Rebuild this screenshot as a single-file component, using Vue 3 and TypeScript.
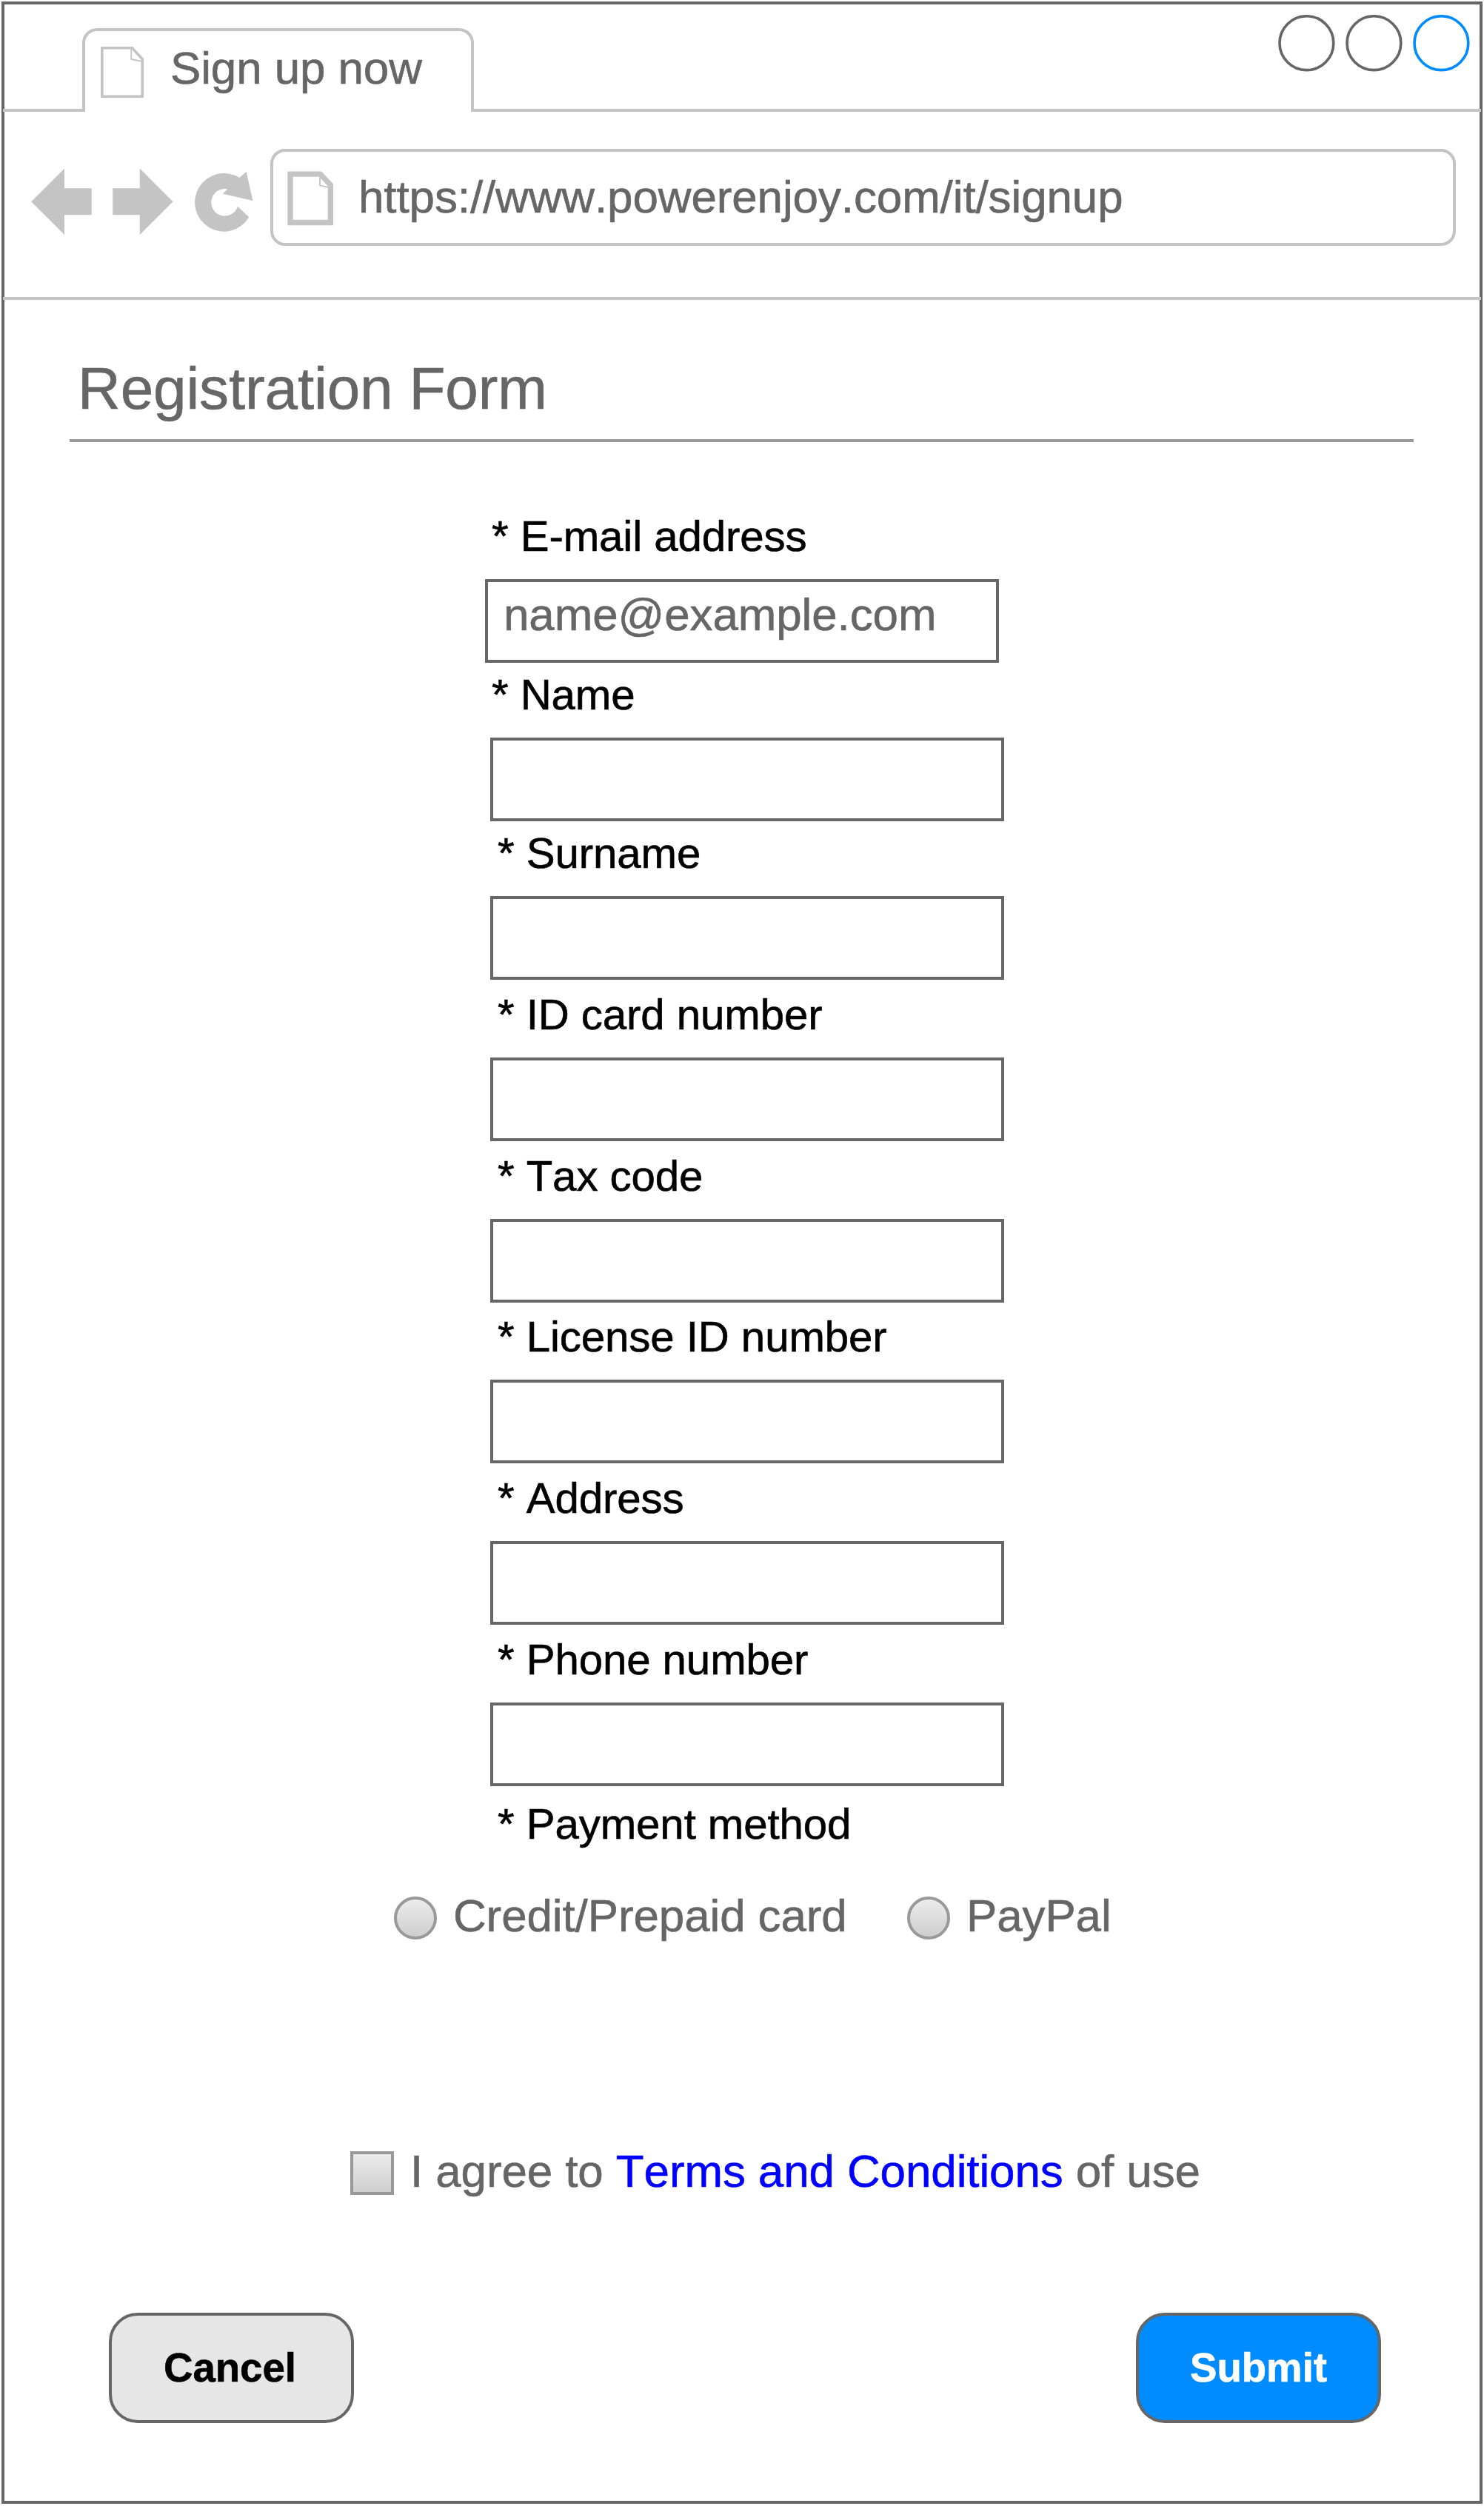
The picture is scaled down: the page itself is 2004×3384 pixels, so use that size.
<script setup lang="ts">
interface Field {
  label: string
  value?: string
  variant?: 'email' | 'name'
}

const fields: Field[] = [
  { label: 'E-mail address', value: 'name@example.com', variant: 'email' },
  { label: 'Name', variant: 'name' },
  { label: 'Surname' },
  { label: 'ID card number' },
  { label: 'Tax code' },
  { label: 'License ID number' },
  { label: 'Address' },
  { label: 'Phone number' },
]

const methods: string[] = ['Credit/Prepaid card', 'PayPal']
const controls: string[] = ['#666', '#666', '#008cff']
</script>

<template>
  <div class="page">
    <div class="window">
      <header class="titlebar">
        <div class="tab">
          <svg class="tab-icon" width="60" height="72" viewBox="0 0 60 72">
            <path d="M2.8 2.8H43.5L57.2 17.8V68.2H2.8Z" fill="none" stroke="#c4c4c4" stroke-width="3.6" />
            <path d="M42.2 4V18L57 21" fill="none" stroke="#c4c4c4" stroke-width="1.8" />
          </svg>
          <span class="tab-title">Sign up now</span>
        </div>
        <div class="controls">
          <svg v-for="(c, i) in controls" :key="i" width="77" height="77" viewBox="0 0 77 77">
            <circle cx="38.4" cy="38.2" r="36.4" fill="#fff" :stroke="c" stroke-width="3.64" />
          </svg>
        </div>
      </header>

      <nav class="toolbar">
        <svg class="nav-icons" width="304" height="92" viewBox="40 226 304 92">
          <g fill="#c4c4c4">
            <path d="M42.2 272.3L87 227.5V254.2H123.7V290.3H87V317Z" />
            <path d="M233.5 272.3L188.8 227.5V254.2H152.2V290.3H188.8V317Z" />
            <path d="M323.2 240A39.3 39.3 0 1 0 336.2 293.3L321 278.7A18.3 18.3 0 1 1 307 255.3L301 261.7L341.5 271L332.6 232Z" />
          </g>
        </svg>
        <div class="urlbar">
          <svg class="url-icon" width="62" height="74" viewBox="388 231.5 62 74">
            <path d="M392 235.7H432.7L446.4 250.4V301H392Z" fill="none" stroke="#c4c4c4" stroke-width="7.3" />
            <path d="M432 238V250.8L446 254" fill="none" stroke="#c4c4c4" stroke-width="1.8" />
          </svg>
          <span class="url">https://www.powerenjoy.com/it/signup</span>
        </div>
      </nav>

      <main class="content">
        <h1>Registration Form</h1>

        <section class="fields">
          <div v-for="f in fields" :key="f.label" class="field" :class="f.variant">
            <div class="label">* {{ f.label }}</div>
            <div class="input">{{ f.value }}</div>
          </div>
        </section>

        <div class="label payment">* Payment method</div>
        <div class="methods">
          <div v-for="m in methods" :key="m" class="method">
            <span class="radio"></span>
            <span>{{ m }}</span>
          </div>
        </div>

        <div class="terms">
          <span class="checkbox"></span>
          <span>I agree to <a>Terms and Conditions</a> of use</span>
        </div>

        <div class="actions">
          <button type="button" class="cancel">Cancel</button>
          <button type="button" class="submit">Submit</button>
        </div>
      </main>
    </div>
  </div>
</template>

<style>
body {
  background: #fff;
}
</style>

<style scoped>
.page {
  box-sizing: border-box;
  width: 2004px;
  height: 3384px;
  padding: 2px;
  overflow: hidden;
  background: #fff;
  font-family: "Liberation Sans", Arial, Helvetica, sans-serif;
  font-size: 61.9px;
  line-height: 70px;
  font-kerning: none;
  letter-spacing: -0.08px;
  -webkit-text-stroke: 0.6px currentColor;
  color: #666;
}
.page * {
  box-sizing: border-box;
}
svg {
  display: block;
  flex: none;
}
.window {
  width: 2000px;
  height: 3379px;
  border: 4px solid #666;
}
.titlebar {
  display: flex;
  justify-content: space-between;
  height: 145px;
  margin: 0 -2px;
  padding: 0 15px 0 107px;
  border-bottom: 4px solid #c4c4c4;
}
.tab {
  display: flex;
  width: 529px;
  height: 113px;
  margin-top: 32px;
  padding: 15px 0 0 20px;
  border: 4px solid #c4c4c4;
  border-bottom: 0;
  border-radius: 20px 20px 0 0;
  background: #fff;
}
.tab-icon {
  margin-top: 5px;
}
.tab-title {
  margin-left: 35px;
  white-space: nowrap;
}
.controls {
  display: flex;
  gap: 14px;
  padding-top: 14px;
}
.toolbar {
  display: flex;
  align-items: flex-start;
  height: 254px;
  margin: 0 -2px;
  padding: 50px 34px 0 36px;
  border-bottom: 4px solid #c4c4c4;
}
.nav-icons {
  margin-top: 25px;
}
.urlbar {
  display: flex;
  flex: 1;
  height: 131px;
  margin-left: 21px;
  padding: 26px 0 0 19px;
  border: 4px solid #c4c4c4;
  border-radius: 20px;
}
.url {
  margin-left: 34px;
  white-space: nowrap;
}
h1 {
  width: 1815px;
  height: 122px;
  margin: 70px 0 0 88px;
  padding-left: 11px;
  border-bottom: 4px solid #999;
  font-size: 80px;
  font-weight: 400;
  line-height: 100px;
  letter-spacing: -0.12px;
}
.fields {
  display: flex;
  flex-direction: column;
  gap: 11.8px;
  width: 694px;
  margin: 92px 0 0 656px;
}
.label {
  height: 93px;
  padding-left: 10px;
  font-size: 58.2px;
  color: #000;
  white-space: nowrap;
}
.input {
  height: 113px;
  padding: 9px 0 0 21px;
  border: 4px solid #666;
}
.email,
.name {
  margin-bottom: -3.8px;
}
.email .label,
.name .label {
  padding-left: 2px;
}
.email .input {
  margin: 0 7px 0 -7px;
}
.payment {
  height: 124px;
  margin: 16px 0 0 656px;
}
.methods {
  display: flex;
  margin-left: 526px;
}
.method {
  display: flex;
  width: 693px;
  white-space: nowrap;
}
.radio,
.checkbox {
  flex: none;
  width: 58px;
  height: 58px;
  margin: 9px 22px 0 0;
  border: 4px solid #999;
  background: linear-gradient(#eee, #ccc) border-box;
}
.radio {
  border-radius: 50%;
}
.terms {
  display: flex;
  margin: 275px 0 0 467px;
  white-space: nowrap;
}
.checkbox {
  width: 59px;
  height: 59px;
  margin-top: 8px;
}
.terms a {
  color: #00f;
}
.actions {
  display: flex;
  justify-content: space-between;
  margin: 156px 133px 0 141px;
}
button {
  width: 331px;
  height: 149px;
  padding: 0;
  border: 4px solid #666;
  border-radius: 39px;
  font: 700 54.6px "Liberation Sans", Arial, Helvetica, sans-serif;
}
.cancel {
  padding-right: 4px;
  background: #e6e6e6;
  color: #000;
}
.submit {
  background: #008cff;
  color: #fff;
}
</style>
